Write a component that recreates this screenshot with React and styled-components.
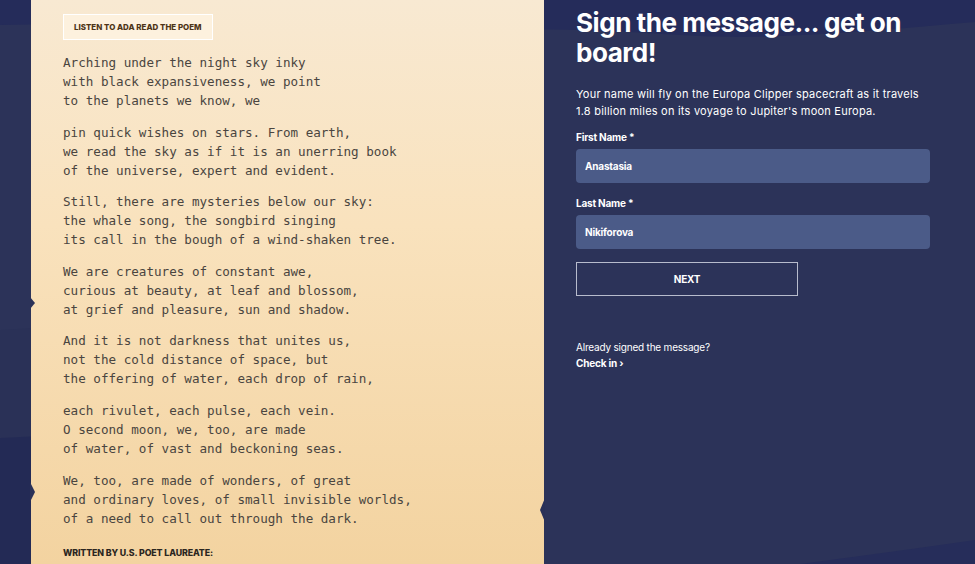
import React from 'react';
import styled, { createGlobalStyle } from 'styled-components';

const GlobalStyle = createGlobalStyle`
  html, body { margin: 0; padding: 0; }
  body {
    background: #2c3359;
    overflow: hidden;
  }
`;

// page shell
const Page = styled.div`
  position: relative;
  width: 975px;
  height: 564px;
  overflow: hidden;
  background: #2c3359;
  display: flex;
  padding-left: 31px;
  box-sizing: border-box;
`;

const Waves = styled.svg`
  position: absolute;
  left: 0;
  top: 0;
  width: 975px;
  height: 564px;
  z-index: 0;
`;

// the poem sheet
const Paper = styled.section`
  position: relative;
  z-index: 1;
  width: 513px;
  flex: none;
  box-sizing: border-box;
  padding: 14px 0 0 32px;
  background: linear-gradient(180deg, #f8e9d2 0%, #f9e2bd 40%, #f3d3a0 100%);
`;

const Notch = styled.div`
  position: absolute;
  top: ${p => p.top}px;
  ${p => (p.side === 'left' ? 'left: -1px;' : 'right: -1px;')}
  width: 5px;
  height: ${p => p.h}px;
  background: #2a3158;
  clip-path: ${p =>
    p.side === 'left'
      ? 'polygon(0 0, 100% 50%, 0 100%)'
      : 'polygon(100% 0, 0 50%, 100% 100%)'};
`;

const ListenButton = styled.button`
  display: block;
  height: 26px;
  padding: 0 10px;
  margin: 0 0 13px;
  background: #fdf1de;
  border: 1px solid #ffffff;
  font-family: 'Inter', 'Liberation Sans', sans-serif;
  font-weight: 800;
  font-size: 7.95px;
  letter-spacing: 0;
  color: #4e3518;
  text-transform: uppercase;
  cursor: pointer;
`;

const Stanza = styled.p`
  margin: 0 0 12.6px;
  font-family: 'DejaVu Sans Mono', 'Liberation Mono', monospace;
  font-size: 12.6px;
  line-height: 19px;
  color: #4a4540;
  white-space: pre-line;
`;

const Credit = styled.div`
  margin-top: 19px;
  font-family: 'Inter', 'Liberation Sans', sans-serif;
  font-weight: 800;
  font-size: 8.8px;
  letter-spacing: -0.1px;
  color: #2b2620;
  text-transform: uppercase;
`;

// sign-up column
const SignUp = styled.section`
  position: relative;
  z-index: 1;
  width: 354px;
  padding: 8px 0 0 32px;
  font-family: 'Inter', 'Liberation Sans', sans-serif;
  color: #ffffff;
`;

const Heading = styled.h1`
  margin: 0 0 18px;
  font-size: 26.1px;
  line-height: 30px;
  font-weight: 700;
  letter-spacing: -0.5px;
`;

const Intro = styled.p`
  max-width: 348px;
  margin: 0 0 10px;
  font-size: 11px;
  line-height: 17px;
  letter-spacing: 0.22px;
`;

const Field = styled.label`
  display: block;
  margin-bottom: 13px;
`;

const LabelText = styled.span`
  display: block;
  font-size: 10px;
  font-weight: 700;
  letter-spacing: -0.2px;
  line-height: 14px;
  margin-bottom: 5px;
`;

const Input = styled.input`
  display: block;
  width: 100%;
  height: 34px;
  box-sizing: border-box;
  border: none;
  border-radius: 4px;
  background: #4b5b88;
  padding: 0 9px;
  color: #ffffff;
  font-family: inherit;
  font-size: 10px;
  font-weight: 700;
  letter-spacing: -0.2px;
  outline: none;
`;

const NextButton = styled.button`
  display: block;
  width: 222px;
  height: 34px;
  background: transparent;
  border: 1px solid #b8bccd;
  color: #ffffff;
  font-family: inherit;
  font-size: 10px;
  font-weight: 700;
  letter-spacing: -0.2px;
  cursor: pointer;
`;

const CheckIn = styled.div`
  margin-top: 43px;
  font-size: 10px;
  line-height: 16px;
  letter-spacing: -0.2px;
`;

const CheckLink = styled.a`
  display: block;
  font-weight: 700;
  color: #ffffff;
  text-decoration: none;
`;

const poem = [
  'Arching under the night sky inky\nwith black expansiveness, we point\nto the planets we know, we',
  'pin quick wishes on stars. From earth,\nwe read the sky as if it is an unerring book\nof the universe, expert and evident.',
  'Still, there are mysteries below our sky:\nthe whale song, the songbird singing\nits call in the bough of a wind-shaken tree.',
  'We are creatures of constant awe,\ncurious at beauty, at leaf and blossom,\nat grief and pleasure, sun and shadow.',
  'And it is not darkness that unites us,\nnot the cold distance of space, but\nthe offering of water, each drop of rain,',
  'each rivulet, each pulse, each vein.\nO second moon, we, too, are made\nof water, of vast and beckoning seas.',
  'We, too, are made of wonders, of great\nand ordinary loves, of small invisible worlds,\nof a need to call out through the dark.',
];

export default function App() {
  return (
    <>
      <GlobalStyle />
      <Page>
        <Waves viewBox="0 0 975 564" preserveAspectRatio="none">
          <path d="M0 0 H975 V22 C880 30 780 40 700 36 C640 33 580 28 520 30 C400 32 300 26 200 24 C120 22 60 24 0 25 Z" fill="#252c5a" />
          <path d="M0 330 C120 322 300 318 520 330 L520 564 L0 564 Z" fill="#2a3157" />
          <path d="M0 438 C100 432 250 436 520 446 L520 564 L0 564 Z" fill="#232a55" />
          <path d="M800 564 C860 556 920 548 975 540 V564 Z" fill="#262d5a" />
        </Waves>

        <Paper>
          <Notch side="left" top={297} h={12} />
          <Notch side="left" top={482} h={20} />
          <Notch side="right" top={498} h={24} />
          <ListenButton>Listen to Ada read the poem</ListenButton>
          {poem.map((s, i) => (
            <Stanza key={i}>{s}</Stanza>
          ))}
          <Credit>Written by U.S. Poet Laureate:</Credit>
        </Paper>

        <SignUp>
          <Heading>Sign the message... get on board!</Heading>
          <Intro>
            Your name will fly on the Europa Clipper spacecraft as it travels
            1.8 billion miles on its voyage to Jupiter's moon Europa.
          </Intro>
          <Field>
            <LabelText>First Name *</LabelText>
            <Input defaultValue="Anastasia" />
          </Field>
          <Field>
            <LabelText>Last Name *</LabelText>
            <Input defaultValue="Nikiforova" />
          </Field>
          <NextButton>NEXT</NextButton>
          <CheckIn>
            Already signed the message?
            <CheckLink href="#">Check in ›</CheckLink>
          </CheckIn>
        </SignUp>
      </Page>
    </>
  );
}
